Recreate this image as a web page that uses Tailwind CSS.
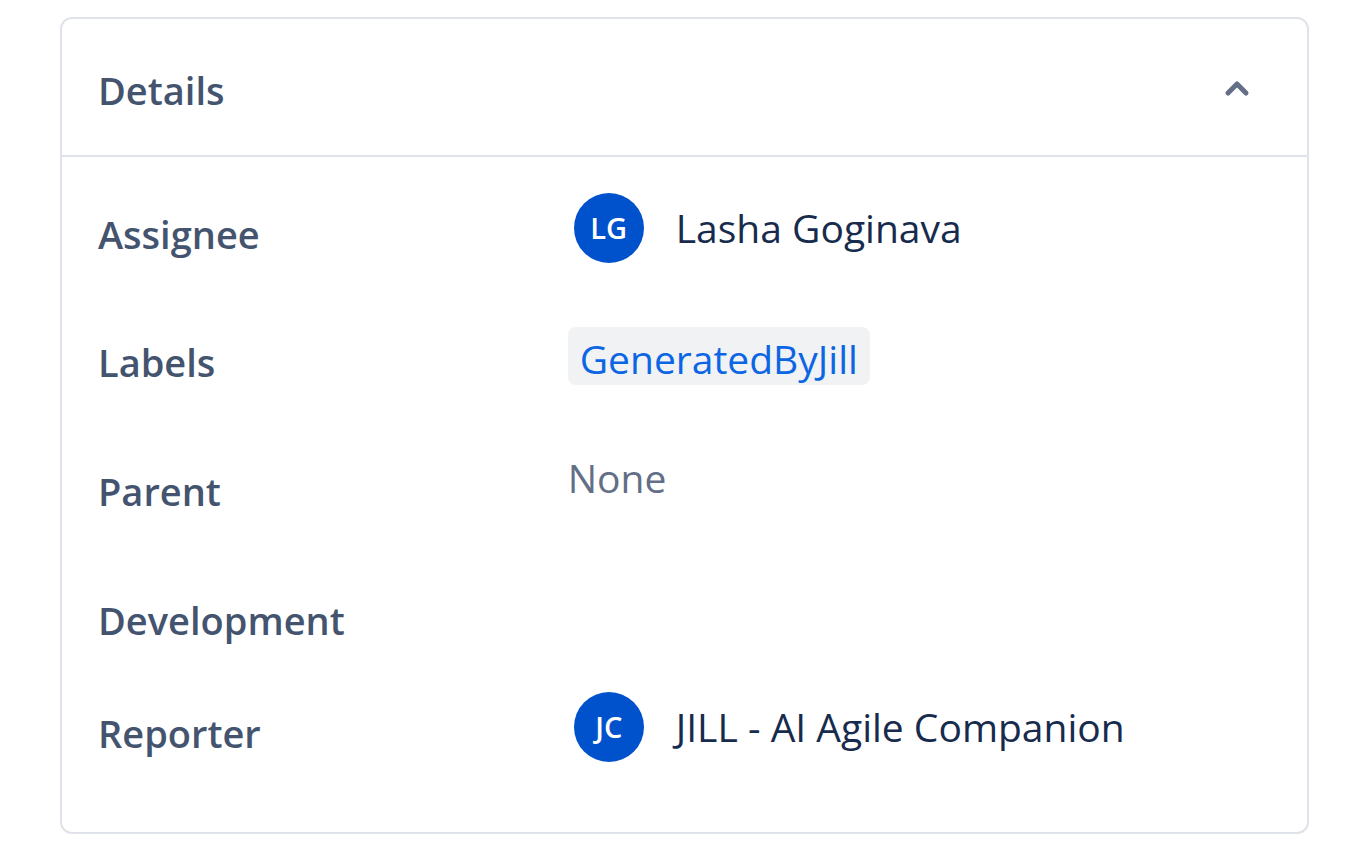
<!DOCTYPE html>
<html lang="en">
<head>
  <meta charset="UTF-8">
  <meta name="viewport" content="width=device-width, initial-scale=1">
  <title>Details</title>
  <script src="https://cdn.jsdelivr.net/npm/@tailwindcss/browser@4"></script>
</head>
<body class="bg-white font-['Open_Sans','Noto_Sans',sans-serif] text-[39px] leading-[56px] text-[#172b4d]">

  <main class="pt-[17px] pl-[60px] pr-[47px] pb-[26px]">
    <section class="border-2 border-[#dfe2e8] rounded-xl">

      <h2 class="border-b-2 border-[#dfe2e8]">
        <button type="button" aria-expanded="true" aria-controls="details" class="w-full flex items-center justify-between pl-9 pr-[56px] pt-[43px] pb-[37px] text-[38px] leading-[56px] font-semibold text-[#44546f]">
          <span>Details</span>
          <svg class="w-7 h-7" viewBox="0 0 28 28" fill="none" stroke="#626f86" stroke-width="5" stroke-linecap="round" stroke-linejoin="round" aria-hidden="true">
            <path d="M5 17l9-9 9 9" />
          </svg>
        </button>
      </h2>

      <dl id="details" class="pt-9 px-9">
        <div class="flex min-h-32">
          <dt class="w-[38%] pt-[13px] text-[38px] font-semibold text-[#44546f]">Assignee</dt>
          <dd class="flex items-center gap-8 h-[70px] pl-[30px]">
            <span class="flex items-center justify-center size-[70px] rounded-full bg-[#0052cc] text-white text-[29px] font-semibold">LG</span>
            <span>Lasha Goginava</span>
          </dd>
        </div>

        <div class="flex min-h-[129px]">
          <dt class="w-[38%] pt-[13px] text-[38px] font-semibold text-[#44546f]">Labels</dt>
          <dd class="pt-[6px] pl-6">
            <a href="#" class="block h-[58px] px-3 pt-1 rounded-lg bg-[#f1f2f4] text-[#0c66e4]">GeneratedByJill</a>
          </dd>
        </div>

        <div class="flex min-h-[129px]">
          <dt class="w-[38%] pt-[13px] text-[38px] font-semibold text-[#44546f]">Parent</dt>
          <dd class="pl-6 text-[#626f86]">None</dd>
        </div>

        <div class="flex min-h-[113px]">
          <dt class="w-[38%] pt-[13px] text-[38px] font-semibold text-[#44546f]">Development</dt>
          <dd></dd>
        </div>

        <div class="flex min-h-[140px]">
          <dt class="w-[38%] pt-[13px] text-[38px] font-semibold text-[#44546f]">Reporter</dt>
          <dd class="flex items-center gap-8 h-[70px] pl-[30px]">
            <span class="flex items-center justify-center size-[70px] rounded-full bg-[#0052cc] text-white text-[29px] font-semibold">JC</span>
            <span>JILL - AI Agile Companion</span>
          </dd>
        </div>
      </dl>

    </section>
  </main>

</body>
</html>
